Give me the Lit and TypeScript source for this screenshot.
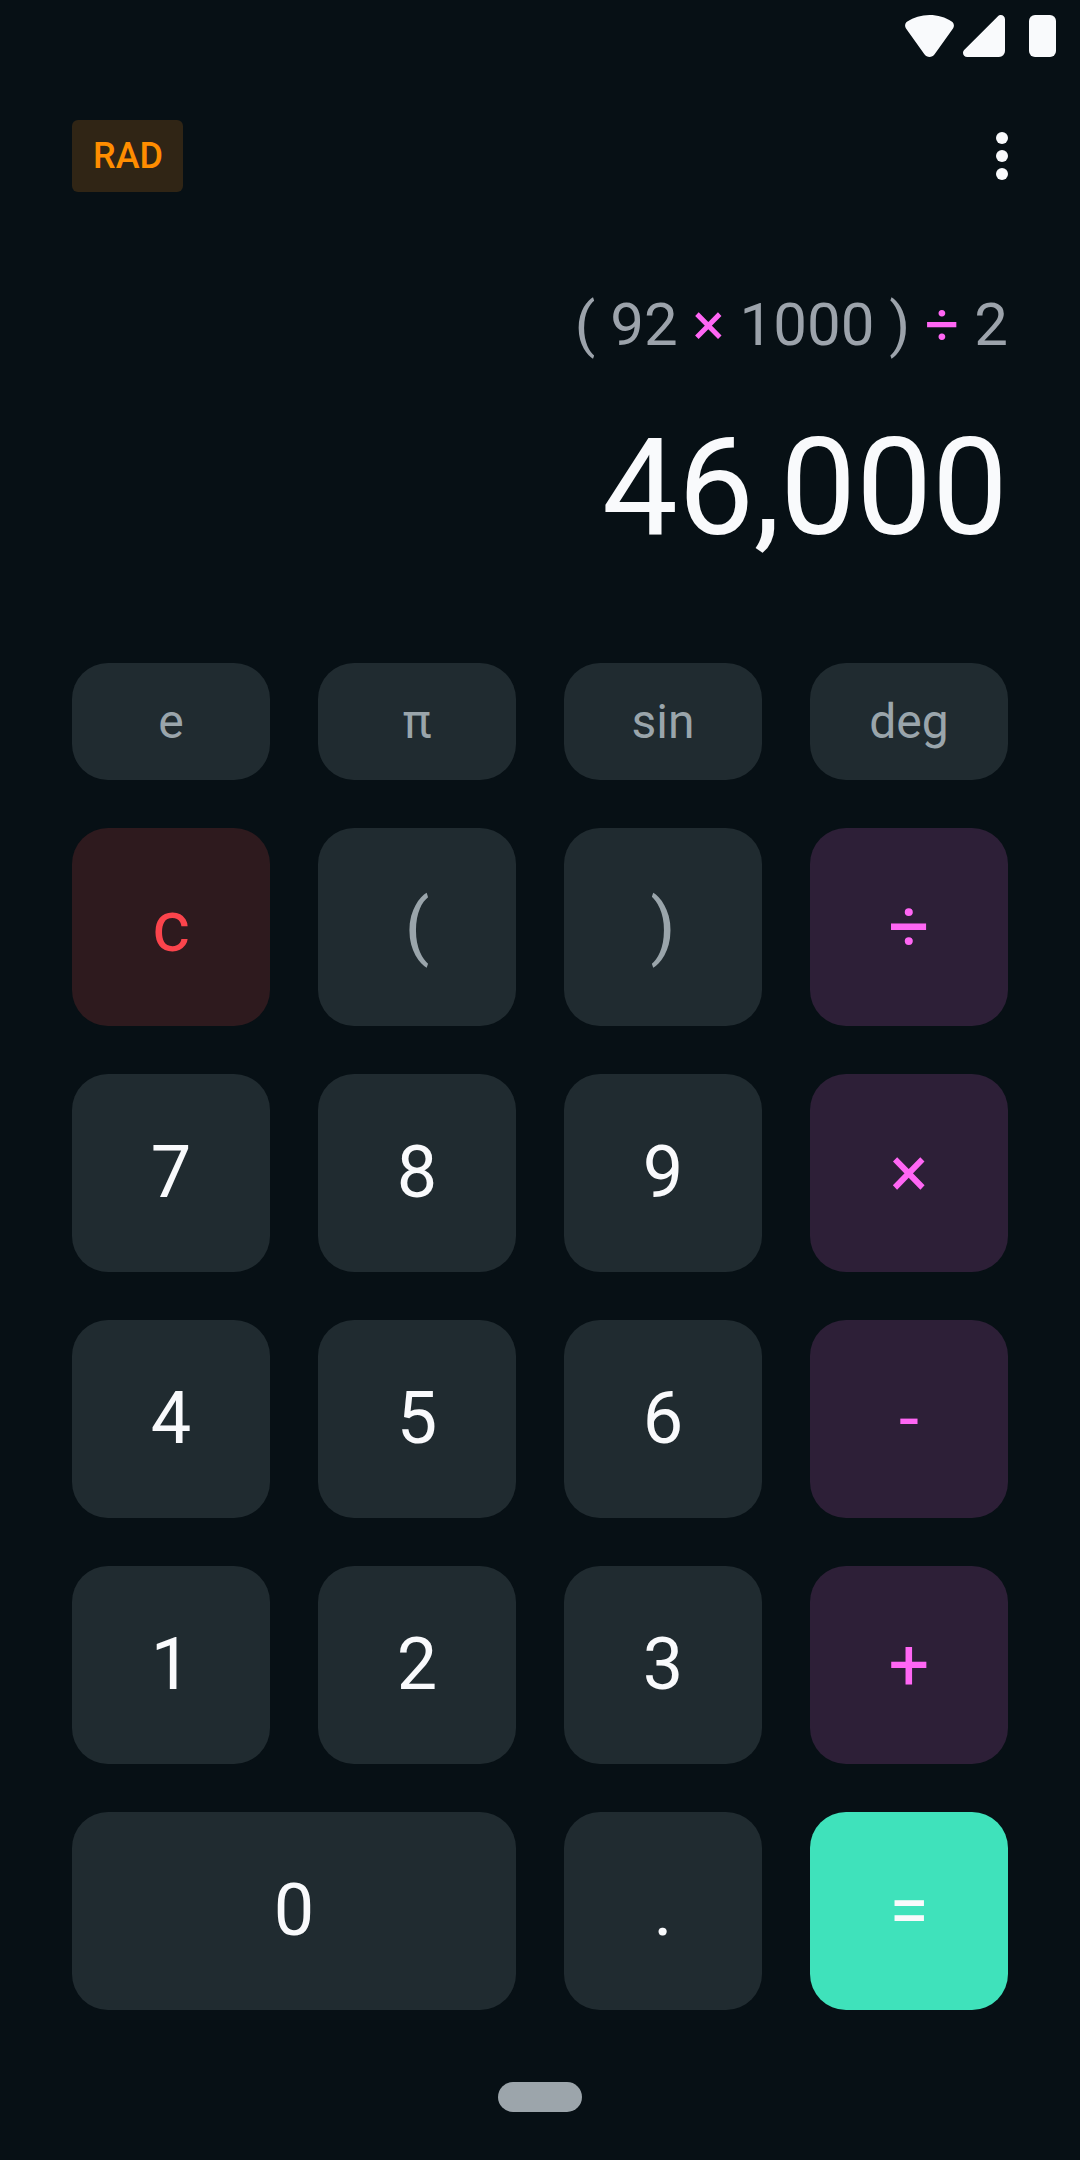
import { LitElement, html, css } from "lit";
import { customElement, state } from "lit/decorators.js";

type Key = { label: string; kind: string };

const KEYS: Key[] = [
  { label: "e", kind: "fn" },
  { label: "π", kind: "fn" },
  { label: "sin", kind: "fn" },
  { label: "deg", kind: "fn" },
  { label: "c", kind: "clear" },
  { label: "(", kind: "paren" },
  { label: ")", kind: "paren" },
  { label: "÷", kind: "op" },
  { label: "7", kind: "num" },
  { label: "8", kind: "num" },
  { label: "9", kind: "num" },
  { label: "×", kind: "op" },
  { label: "4", kind: "num" },
  { label: "5", kind: "num" },
  { label: "6", kind: "num" },
  { label: "-", kind: "op" },
  { label: "1", kind: "num" },
  { label: "2", kind: "num" },
  { label: "3", kind: "num" },
  { label: "+", kind: "op" },
  { label: "0", kind: "num wide" },
  { label: ".", kind: "num" },
  { label: "=", kind: "equals" },
];

@customElement("app-root")
export class AppRoot extends LitElement {
  @state() private tokens = ["(", "92", "×", "1000", ")", "÷", "2"];
  @state() private result = "46,000";

  static styles = css`
    :host {
      display: flex;
      flex-direction: column;
      box-sizing: border-box;
      width: 1080px;
      height: 2160px;
      padding: 0 72px;
      background: #071015;
      color: #f9fafc;
      font-family: Roboto, "Liberation Sans", sans-serif;
      overflow: hidden;
    }
    .status {
      display: flex;
      justify-content: flex-end;
      height: 57px;
      padding-top: 15px;
      margin-right: -48px;
      box-sizing: border-box;
    }
    .status svg {
      display: block;
      height: 42px;
      fill: #f9fafc;
    }
    .wifi {
      margin-right: 9px;
    }
    .signal {
      margin-right: 24px;
    }
    .toolbar {
      display: flex;
      justify-content: space-between;
      align-items: center;
      margin-top: 63px;
      height: 72px;
    }
    .mode {
      display: flex;
      align-items: center;
      justify-content: center;
      width: 111px;
      height: 72px;
      padding: 0 0 0 1px;
      box-sizing: border-box;
      border-radius: 6px;
      background: #302515;
      color: #ff8d00;
      font-size: 36px;
      font-weight: 500;
    }
    .more {
      display: flex;
      flex-direction: column;
      gap: 6px;
      border: 0;
      padding: 0;
      background: none;
    }
    .dot {
      width: 12px;
      height: 12px;
      border-radius: 50%;
      background: #f9fafc;
    }
    .display {
      display: flex;
      flex-direction: column;
      align-items: flex-end;
      margin-top: 98px;
      height: 373px;
    }
    .expression {
      font-size: 60px;
      line-height: 70px;
      color: #9ca3ab;
      white-space: pre;
    }
    .sign {
      color: #ff66f4;
    }
    .result {
      margin-top: 49px;
      font-size: 135px;
      line-height: 158px;
    }
    .keys {
      display: grid;
      grid-template-columns: repeat(4, 198px);
      grid-template-rows: 117px repeat(5, 198px);
      gap: 48px;
    }
    .key {
      display: flex;
      align-items: center;
      justify-content: center;
      border: 0;
      padding: 0 0 2px;
      border-radius: 36px;
      background: #202b30;
      color: #f9fafc;
      font-family: inherit;
      font-size: 72px;
      font-weight: 400;
    }
    .fn {
      padding: 0;
      font-size: 48px;
    }
    .fn,
    .paren {
      color: #9aa5ab;
    }
    .clear {
      background: #2e1a1e;
      color: #fb444c;
    }
    .op {
      background: #2d1f37;
      color: #ff66f4;
    }
    .wide {
      grid-column: span 2;
    }
    .equals {
      background: #3fe2bb;
    }
    .home {
      align-self: center;
      margin-top: 72px;
      width: 84px;
      height: 30px;
      border-radius: 15px;
      background: #9ca5ab;
    }
  `;

  render() {
    return html`
      <div class="status">
        <svg class="wifi" width="49" viewBox="0 0 49 42">
          <path d="M2.3 6.5C8.6 2.2 16.2 0 24.5 0S40.4 2.2 46.7 6.5C49.1 8.2 49.6 11.2 48 13.5L29.6 39.2C27 42.9 22 42.9 19.4 39.2L1 13.5C-.6 11.2-.1 8.2 2.3 6.5Z" />
        </svg>
        <svg class="signal" width="42" viewBox="0 0 42 42">
          <path d="M34.7 1.4C37.5-1.4 42 .3 42 4.3V36a6 6 0 0 1-6 6H4.3C.3 42-1.4 37.5 1.4 34.7Z" />
        </svg>
        <svg width="27" viewBox="0 0 27 42"><rect width="27" height="42" rx="6" /></svg>
      </div>
      <div class="toolbar">
        <div class="mode">RAD</div>
        <button class="more" aria-label="Menu">
          <span class="dot"></span><span class="dot"></span><span class="dot"></span>
        </button>
      </div>
      <div class="display">
        <div class="expression">${this.tokens.map((t, i) => html`${i ? " " : ""}${"×÷".includes(t) ? html`<span class="sign">${t}</span>` : t}`)}</div>
        <div class="result">${this.result}</div>
      </div>
      <div class="keys">
        ${KEYS.map((k) => html`<button class="key ${k.kind}">${k.label}</button>`)}
      </div>
      <div class="home"></div>
    `;
  }
}
